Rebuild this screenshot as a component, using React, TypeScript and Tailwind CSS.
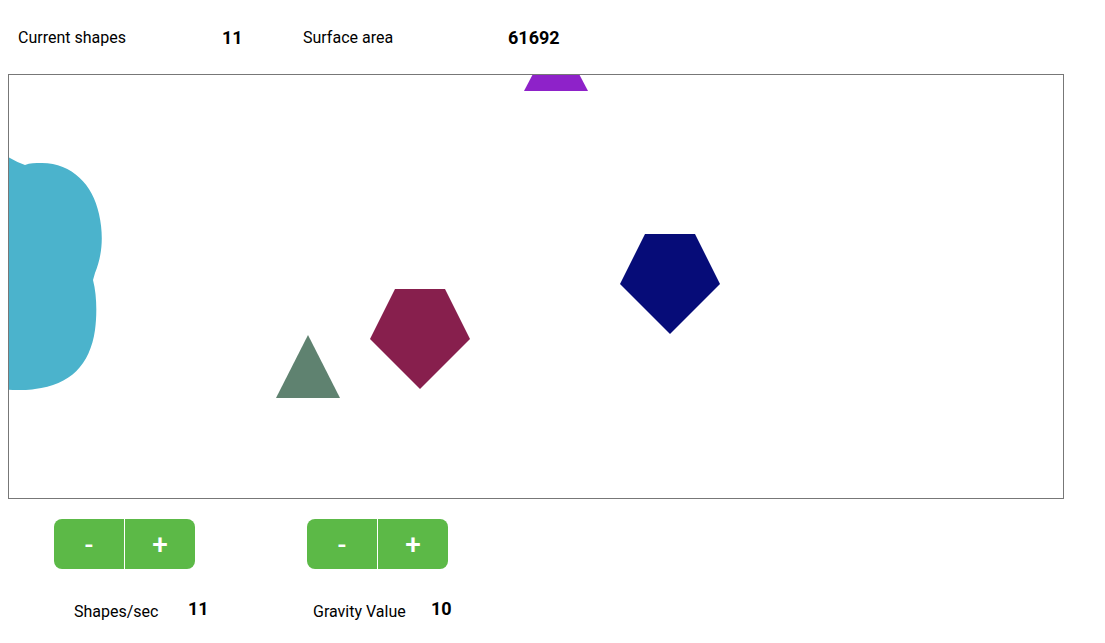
import React from "react";

const font = { fontFamily: "Roboto, 'Liberation Sans', sans-serif" };

function Stepper() {
  return (
    <div className="flex h-[50px] w-[141px] overflow-hidden rounded-lg bg-[#5cb947] text-white">
      <button className="flex w-[70px] items-center justify-center pt-[2px] text-[26px] font-medium leading-none">-</button>
      <div className="w-px bg-white" />
      <button className="flex w-[70px] items-center justify-center pt-[2px] text-[28px] font-medium leading-none">+</button>
    </div>
  );
}

export default function App() {
  // canvas-local coords: page x - 9, page y - 75
  const ox = 9;
  const oy = 75;
  const pt = (x: number, y: number) => `${x - ox},${y - oy}`;
  const cloud = `M ${pt(-20, 150)} L ${pt(8, 157)} Q ${pt(16, 162)} ${pt(25, 165)} C ${pt(30, 163)} ${pt(35, 163)} ${pt(42, 163)} C ${pt(72, 163)} ${pt(93, 185)} ${pt(99, 214)} C ${pt(104, 236)} ${pt(102, 256)} ${pt(95, 273)} L ${pt(93, 280)} C ${pt(97, 295)} ${pt(97, 315)} ${pt(95, 330)} C ${pt(90, 365)} ${pt(70, 385)} ${pt(35, 389)} C ${pt(25, 391)} ${pt(15, 390)} ${pt(-20, 388)} Z`;
  return (
    <div className="h-[643px] w-[1105px] bg-white text-black" style={font}>
      <div className="flex h-[74px] items-center pl-[18px] pt-[1px] text-[16px]">
        <div className="w-[204px]">Current shapes</div>
        <div className="w-[81px] text-[18px] font-bold">11</div>
        <div className="w-[205px]">Surface area</div>
        <div className="text-[18px] font-bold">61692</div>
      </div>
      <div className="ml-2 h-[425px] w-[1056px] border border-[#777] overflow-hidden relative">
        <svg className="absolute left-0 top-0" width="1054" height="423">
          <polygon points={`${pt(556, 30)} ${pt(588, 91)} ${pt(524, 91)}`} fill="#8e22c9" />
          <path d={cloud} fill="#4bb3cc" />
          <polygon points={`${pt(308, 335)} ${pt(340, 398)} ${pt(276, 398)}`} fill="#5f8270" />
          <polygon
            points={`${pt(395, 289)} ${pt(445, 289)} ${pt(470, 339)} ${pt(420, 389)} ${pt(370, 339)}`}
            fill="#871f4d"
          />
          <polygon
            points={`${pt(645, 234)} ${pt(695, 234)} ${pt(720, 284)} ${pt(670, 334)} ${pt(620, 284)}`}
            fill="#060c78"
          />
        </svg>
      </div>
      <div className="mt-5 flex">
        <div className="ml-[54px] flex w-[141px] flex-col">
          <Stepper />
          <div className="mt-[28px] flex items-baseline whitespace-nowrap text-[16px]">
            <span className="ml-[20px] w-[114px] shrink-0">Shapes/sec</span>
            <span className="relative -top-[2px] text-[18px] font-bold">11</span>
          </div>
        </div>
        <div className="ml-[112px] flex w-[141px] flex-col">
          <Stepper />
          <div className="mt-[28px] flex items-baseline whitespace-nowrap text-[16px]">
            <span className="ml-[6px] w-[118px] shrink-0">Gravity Value</span>
            <span className="relative -top-[2px] text-[18px] font-bold">10</span>
          </div>
        </div>
      </div>
    </div>
  );
}
